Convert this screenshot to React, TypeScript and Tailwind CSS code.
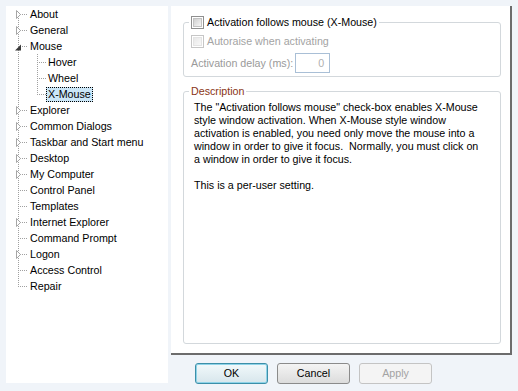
import React from "react";

type Node = {
  label: string;
  exp?: "closed" | "open";
  child?: boolean;
  last?: boolean;
  selected?: boolean;
};

const tree: Node[] = [
  { label: "About", exp: "closed" },
  { label: "General", exp: "closed" },
  { label: "Mouse", exp: "open" },
  { label: "Hover", child: true },
  { label: "Wheel", child: true },
  { label: "X-Mouse", child: true, last: true, selected: true },
  { label: "Explorer", exp: "closed" },
  { label: "Common Dialogs", exp: "closed" },
  { label: "Taskbar and Start menu", exp: "closed" },
  { label: "Desktop", exp: "closed" },
  { label: "My Computer", exp: "closed" },
  { label: "Control Panel" },
  { label: "Templates" },
  { label: "Internet Explorer", exp: "closed" },
  { label: "Command Prompt" },
  { label: "Logon", exp: "closed" },
  { label: "Access Control" },
  { label: "Repair", last: true },
];

const dot = { stroke: "#a0a0a0", strokeWidth: 1, strokeDasharray: "1 1", shapeRendering: "crispEdges" as const };

function Gutter({ node, first }: { node: Node; first: boolean }) {
  if (node.child) {
    return (
      <svg width="40" height="16" className="shrink-0">
        <line x1="12.5" y1="0" x2="12.5" y2="16" {...dot} />
        <line x1="31.5" y1="0" x2="31.5" y2={node.last ? 9 : 16} {...dot} />
        <line x1="33" y1="8.5" x2="40" y2="8.5" {...dot} />
      </svg>
    );
  }
  const rootLast = node.label === "Repair";
  return (
    <svg width="22" height="16" className="shrink-0">
      <line x1="12.5" y1={first ? 8 : 0} x2="12.5" y2={rootLast ? 9 : 16} {...dot} />
      <line x1="14" y1="8.5" x2="22" y2="8.5" {...dot} />
      {node.exp === "closed" && (
        <path d="M10.5 4.5 L10.5 12.5 L14.5 8.5 Z" fill="#fff" stroke="#a6a6a6" strokeWidth="1" />
      )}
      {node.exp === "open" && <path d="M9 12.5 L15 12.5 L15 6.5 Z" fill="#3a3a3a" />}
    </svg>
  );
}

function Check({ disabled }: { disabled?: boolean }) {
  return (
    <span
      className={`inline-block h-[13px] w-[13px] shrink-0 border p-px ${
        disabled ? "border-[#c6c6c6]" : "border-[#8f8f8f]"
      }`}
    >
      <span
        className={`block h-full w-full border ${
          disabled
            ? "border-[#e4e4e4] bg-gradient-to-br from-[#e8e8e8] to-[#f8f8f8]"
            : "border-[#c2c2c2] bg-gradient-to-br from-[#cfcfcf] to-[#f6f6f6]"
        }`}
      />
    </span>
  );
}

function Button({ label, primary, disabled }: { label: string; primary?: boolean; disabled?: boolean }) {
  return (
    <button
      className={`flex h-[21px] w-[73px] items-center justify-center rounded-[3px] border text-[10.7px] ${
        primary
          ? "border-[#3c8fa9] bg-gradient-to-b from-[#f2f9fb] to-[#d7e6ec] text-black shadow-[inset_0_0_0_1px_#8fd3e8]"
          : disabled
          ? "border-[#c4c4c4] bg-[#f4f4f4] text-[#a3a3a3]"
          : "border-[#8b8b8b] bg-gradient-to-b from-[#f4f4f4] to-[#dcdcdc] text-black"
      }`}
    >
      {label}
    </button>
  );
}

export default function App() {
  return (
    <div
      className="flex h-[391px] w-[518px] gap-[3px] bg-[#f0f4f9] pl-[6px] pt-[6px] text-[10.7px] leading-[13px] text-black"
      style={{ fontFamily: '"Liberation Sans", Arial, sans-serif' }}
    >
      <div className="flex h-[377px] w-[162px] flex-col bg-white">
        {tree.map((n, i) => (
          <div key={n.label} className="flex h-[16px] items-center">
            <Gutter node={n} first={i === 0} />
            <span
              className={`flex h-[15px] items-center whitespace-nowrap px-[1px] ${
                n.selected ? "border border-dotted border-black bg-[#cbe6f7]" : "border border-transparent"
              }`}
            >
              {n.label}
            </span>
          </div>
        ))}
      </div>

      <div className="flex flex-col">
        <div className="flex h-[349px] w-[341px] flex-col border-r-2 border-b-2 border-[#6c6c6c] bg-white pl-[12px] pt-[10px]">
          <fieldset className="w-[318px] rounded-[3px] border border-[#d3d8dc] px-[7px] pb-[3px] pt-[6px]">
            <legend className="ml-[-2px] flex items-center gap-[3px] px-[2px]">
              <Check />
              <span>Activation follows mouse (X-Mouse)</span>
            </legend>
            <div className="flex items-center gap-[3px] text-[#a3a3a3]">
              <Check disabled />
              <span>Autoraise when activating</span>
            </div>
            <div className="mt-[5px] flex items-center gap-[2px] text-[#9a9a9a]">
              <span>Activation delay (ms):</span>
              <span className="flex h-[20px] w-[35px] items-center justify-end border border-[#a9bfd6] pr-[5px] text-[#b0b0b0]">
                0
              </span>
            </div>
          </fieldset>

          <fieldset className="mt-[8px] h-[259px] w-[318px] rounded-[3px] border border-[#d3d8dc] pl-[10px] pt-[3px]">
            <legend className="ml-[-5px] px-[2px] text-[#8a3516]">Description</legend>
            <div className="whitespace-pre">
              <div>The "Activation follows mouse" check-box enables X-Mouse</div>
              <div>style window activation. When X-Mouse style window</div>
              <div>activation is enabled, you need only move the mouse into a</div>
              <div>window in order to give it focus.  Normally, you must click on</div>
              <div>a window in order to give it focus.</div>
              <div>&nbsp;</div>
              <div>This is a per-user setting.</div>
            </div>
          </fieldset>
        </div>

        <div className="mt-[8px] flex gap-[9px] pl-[24px]">
          <Button label="OK" primary />
          <Button label="Cancel" />
          <Button label="Apply" disabled />
        </div>
      </div>
    </div>
  );
}
